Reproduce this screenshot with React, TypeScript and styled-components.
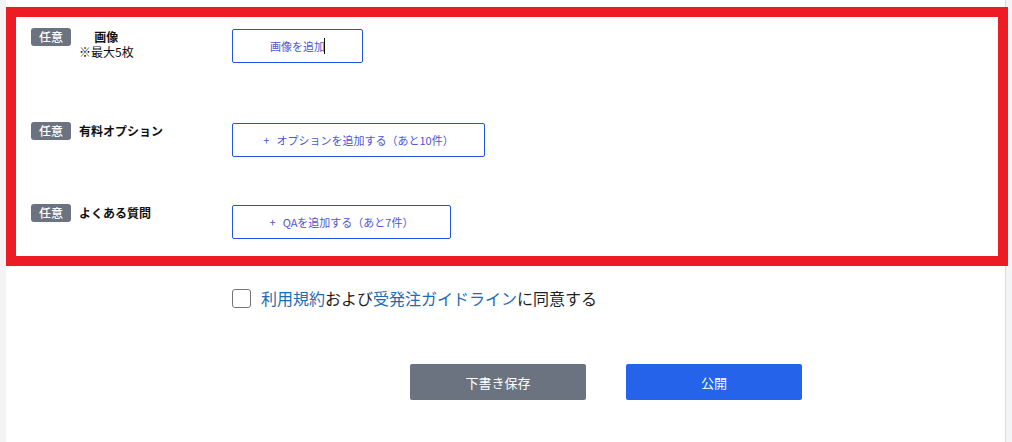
import styled, { createGlobalStyle } from 'styled-components'

const GlobalStyle = createGlobalStyle`
  html, body {
    margin: 0;
    padding: 0;
    background: #f3f4f6;
    font-family: "Noto Sans CJK JP", "Noto Sans", sans-serif;
    color: #111827;
  }
`

const Page = styled.div`
  width: 1012px;
  height: 442px;
  overflow: hidden;
  padding-left: 6px;
  padding-right: 6px;
  box-sizing: border-box;
`

const Panel = styled.div`
  background: #fff;
  border-right: 1px solid #dcdcdc;
  height: 100%;
  padding-top: 7px;
  box-sizing: border-box;
`

const Highlight = styled.section`
  border: 10px solid #ed1c24;
  margin-right: -3px;
  padding: 11px 15px 17px 15px;
  display: flex;
  flex-direction: column;
`

const Row = styled.div<{ $gap: number }>`
  display: grid;
  grid-template-columns: 201px 1fr;
  align-items: start;
  min-height: 35px;
  margin-bottom: ${(p) => p.$gap}px;
  &:last-child {
    margin-bottom: 0;
  }
`

const LabelCell = styled.div`
  display: flex;
  align-items: flex-start;
  gap: 8px;
`

const Badge = styled.span`
  flex: none;
  background: #6b7280;
  color: #fff;
  font-size: 12px;
  font-weight: 500;
  line-height: 18px;
  width: 40px;
  text-align: center;
  border-radius: 3px;
`

const Label = styled.div<{ $center?: boolean }>`
  font-size: 12px;
  font-weight: 700;
  line-height: 15px;
  padding-top: 1px;
  color: #111;
  text-align: ${(p) => (p.$center ? 'center' : 'left')};
`

const Note = styled.span`
  display: block;
  font-weight: 400;
`

const AddButton = styled.button<{ $width: number }>`
  margin-top: 1px;
  width: ${(p) => p.$width}px;
  height: 34px;
  background: #fff;
  border: 1px solid #2255dd;
  border-radius: 2px;
  color: #4f55d9;
  font-family: inherit;
  font-size: 11px;
  padding: 0;
  display: flex;
  align-items: center;
  justify-content: center;
`

const Caret = styled.span`
  display: inline-block;
  width: 1px;
  height: 16px;
  background: #111;
  margin-left: -1px;
`

const Plus = styled.span`
  margin-right: 7px;
`

const Agreement = styled.div`
  margin-top: 22px;
  padding-left: 226px;
  display: flex;
  align-items: center;
  gap: 10px;
  font-size: 16px;
  line-height: 20px;
  color: #1f1f1f;
`

const Checkbox = styled.span`
  width: 19px;
  height: 19px;
  box-sizing: border-box;
  border: 1.5px solid #767676;
  border-radius: 3px;
  background: #fff;
`

const Link = styled.a`
  color: #1d6cb5;
  text-decoration: none;
`

const Actions = styled.div`
  margin-top: 56px;
  margin-left: 226px;
  width: 748px;
  display: flex;
  justify-content: center;
  gap: 40px;
`

const ActionButton = styled.button<{ $primary?: boolean }>`
  width: 176px;
  height: 36px;
  border: none;
  border-radius: 2px;
  background: ${(p) => (p.$primary ? '#2563eb' : '#6b7280')};
  color: #fff;
  font-family: inherit;
  font-size: 13px;
`

export default function App() {
  return (
    <>
      <GlobalStyle />
      <Page>
        <Panel>
          <Highlight>
            <Row $gap={59}>
              <LabelCell>
                <Badge>任意</Badge>
                <Label $center>
                  画像
                  <Note>※最大5枚</Note>
                </Label>
              </LabelCell>
              <AddButton $width={131}>
                画像を追加
                <Caret />
              </AddButton>
            </Row>
            <Row $gap={47}>
              <LabelCell>
                <Badge>任意</Badge>
                <Label>有料オプション</Label>
              </LabelCell>
              <AddButton $width={253}>
                <Plus>+</Plus>オプションを追加する（あと10件）
              </AddButton>
            </Row>
            <Row $gap={0}>
              <LabelCell>
                <Badge>任意</Badge>
                <Label>よくある質問</Label>
              </LabelCell>
              <AddButton $width={219}>
                <Plus>+</Plus>QAを追加する（あと7件）
              </AddButton>
            </Row>
          </Highlight>
          <Agreement>
            <Checkbox />
            <span>
              <Link href="#">利用規約</Link>および<Link href="#">受発注ガイドライン</Link>に同意する
            </span>
          </Agreement>
          <Actions>
            <ActionButton>下書き保存</ActionButton>
            <ActionButton $primary>公開</ActionButton>
          </Actions>
        </Panel>
      </Page>
    </>
  )
}
